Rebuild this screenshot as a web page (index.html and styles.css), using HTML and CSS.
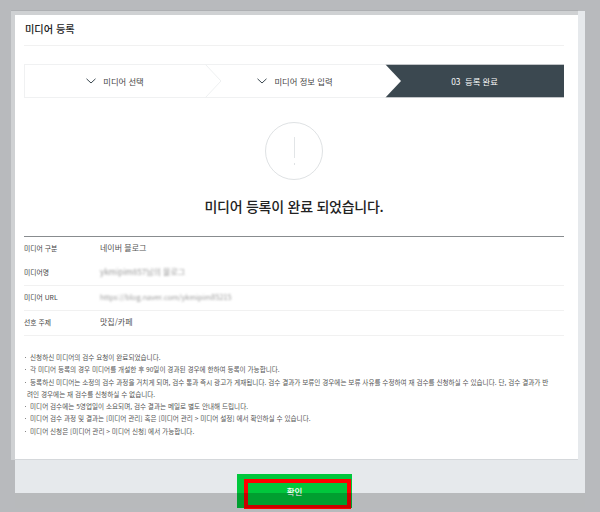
FILE: index.html
```html
<!DOCTYPE html>
<html lang="ko">
<head>
<meta charset="utf-8">
<title>미디어 등록</title>
<link rel="stylesheet" href="styles.css">
</head>
<body>
<div class="frame">
  <div class="panel">
    <main class="card">
      <h1 class="title">미디어 등록</h1>
      <div class="steps">
        <div class="step done">
          <svg class="check" viewBox="0 0 10 6" width="10" height="6"><path d="M0.5 0.8 L5 5 L9.5 0.8" fill="none" stroke="#3b4850" stroke-width="1"/></svg>
          <span>미디어 선택</span>
          <svg class="arrow" viewBox="0 0 17 34" width="17" height="34"><path d="M0 0 L16 17 L0 34" fill="#fff" stroke="#eef0f1" stroke-width="1"/></svg>
        </div>
        <div class="step done">
          <svg class="check" viewBox="0 0 10 6" width="10" height="6"><path d="M0.5 0.8 L5 5 L9.5 0.8" fill="none" stroke="#3b4850" stroke-width="1"/></svg>
          <span>미디어 정보 입력</span>
        </div>
        <div class="step current">
          <svg class="arrow-cur" viewBox="0 0 17 34" width="17" height="34"><path d="M0 0 L16 17 L0 34 Z" fill="#fff"/></svg>
          <span>03 &nbsp;등록 완료</span>
        </div>
      </div>
      <div class="result">
        <div class="alert"><span class="bar"></span><span class="dot"></span></div>
        <h2 class="message">미디어 등록이 완료 되었습니다.</h2>
      </div>
      <dl class="info">
        <div class="row"><dt>미디어 구분</dt><dd>네이버 블로그</dd></div>
        <div class="row"><dt>미디어명</dt><dd class="blur">ykmipim857님의 블로그</dd></div>
        <div class="row"><dt>미디어 URL</dt><dd class="blur small">https://blog.naver.com/ykmipim85215</dd></div>
        <div class="row"><dt>선호 주제</dt><dd>맛집/카페</dd></div>
      </dl>
      <ul class="notes">
        <li>신청하신 미디어의 검수 요청이 완료되었습니다.</li>
        <li>각 미디어 등록의 경우 미디어를 개설한 후 90일이 경과된 경우에 한하여 등록이 가능합니다.</li>
        <li>등록하신 미디어는 소정의 검수 과정을 거치게 되며, 검수 통과 즉시 광고가 게재됩니다. 검수 결과가 보류인 경우에는 보류 사유를 수정하여 재 검수를 신청하실 수 있습니다. 단, 검수 결과가 반려인 경우에는 재 검수를 신청하실 수 없습니다.</li>
        <li>미디어 검수에는 5영업일이 소요되며, 검수 결과는 메일로 별도 안내해 드립니다.</li>
        <li>미디어 검수 과정 및 결과는 [미디어 관리] 혹은 [미디어 관리 &gt; 미디어 설정] 에서 확인하실 수 있습니다.</li>
        <li>미디어 신청은 [미디어 관리 &gt; 미디어 신청] 에서 가능합니다.</li>
      </ul>
    </main>
    <div class="actions">
      <div class="btn-wrap">
        <button class="btn" type="button">확인</button>
        <span class="mark"></span>
      </div>
    </div>
    <div class="dim"></div>
  </div>
</div>
</body>
</html>
```
FILE: styles.css
```css
* { box-sizing: border-box; }
html, body { margin: 0; height: 100%; }
body {
  width: 600px;
  height: 512px;
  overflow: hidden;
  background: #b8babd;
  font-family: "Noto Sans CJK KR", "Noto Sans", sans-serif;
  color: #333;
}
.frame { padding: 15px 0 0 15px; }
.panel {
  position: relative;
  width: 570px;
  height: 497px;
  background: #e6e9ec;
}
.card {
  width: 567px;
  height: 449px;
  margin: -4px 0 0 -4px;
  background: #fff;
  border-top: 4px solid #cfd1d3;
  border-left: 4px solid #cfd1d3;
  box-shadow: 0 -1px 0 #aeb0b3;
  padding: 0 14px 0 9px;
  position: relative;
}
.card::after {
  content: "";
  position: absolute;
  left: 0;
  right: 0;
  bottom: 0;
  height: 1px;
  background: #d5d8db;
}
.title {
  margin: 0;
  height: 31px;
  padding-left: 1px;
  border-bottom: 1px solid #f1f1f1;
  font-size: 10.2px;
  font-weight: 500;
  line-height: 28px;
  color: #222;
}
.steps {
  display: flex;
  height: 34px;
  margin-top: 18px;
  font-size: 8.3px;
  color: #444;
}
.step {
  position: relative;
  display: flex;
  align-items: center;
  justify-content: center;
  gap: 7px;
  border: 1px solid #f0f1f2;
  border-width: 1px 0;
}
.step:first-child { border-left: 1px solid #f0f1f2; width: 181px; }
.step:nth-child(2) { width: 180px; }
.step.current {
  width: 179px;
  background: #3b4850;
  color: #fff;
  border-color: #c2c5c8;
}
.arrow, .arrow-cur { position: absolute; left: 0; top: -1px; }
.arrow { left: 180px; z-index: 1; }
.check { flex: none; }
.result { text-align: center; padding-top: 24px; }
.alert {
  position: relative;
  width: 58px;
  height: 58px;
  margin: 0 auto;
  border: 1px solid #dfe2e4;
  border-radius: 50%;
}
.bar {
  position: absolute;
  left: 28px;
  top: 14px;
  width: 1px;
  height: 21px;
  background: #e2e5e7;
}
.dot {
  position: absolute;
  left: 28px;
  top: 40px;
  width: 1px;
  height: 2px;
  background: #dfe2e4;
}
.message {
  margin: 15px 0 0;
  font-size: 14px;
  line-height: 22px;
  font-weight: 500;
  letter-spacing: -0.25px;
  color: #222;
}
.info {
  margin: 19px 0 0;
  border-top: 1px solid #888c8f;
  font-size: 6.8px;
}
.row {
  display: flex;
  align-items: center;
  height: 25px;
  padding-bottom: 3px;
  border-bottom: 1px solid #f1f1f1;
}
.row:first-child { border-bottom: 0; height: 24px; }
dt { width: 76px; color: #444; }
dd { margin: 0; font-size: 8px; color: #555; }
.blur { filter: blur(1px); color: #999; }
.blur.small { font-size: 7.3px; }
.notes {
  list-style: none;
  margin: 15px 0 0;
  padding: 0;
  font-size: 6.6px;
  line-height: 12.3px;
  color: #555;
  width: 528px;
  word-break: break-all;
}
.notes li { position: relative; padding-left: 3px; text-indent: 3px; }
.notes li::before {
  content: "";
  position: absolute;
  left: 1px;
  top: 6px;
  width: 1px;
  height: 1px;
  background: #888;
}
.actions { display: flex; justify-content: center; padding: 14px 11px 0 0; }
.btn-wrap { position: relative; width: 115px; height: 34px; }
.btn {
  display: block;
  width: 100%;
  height: 100%;
  padding: 0;
  border: 0;
  background: #00c73c;
  color: #fff;
  font: 500 8.5px "Noto Sans CJK KR", sans-serif;
}
.mark {
  position: absolute;
  left: 7px;
  top: 5px;
  width: 107px;
  height: 30px;
  border: 4.5px solid #f00;
}
.dim {
  position: absolute;
  left: 0;
  right: 0;
  top: 482px;
  height: 15px;
  background: rgba(0, 0, 0, 0.2);
}
```
